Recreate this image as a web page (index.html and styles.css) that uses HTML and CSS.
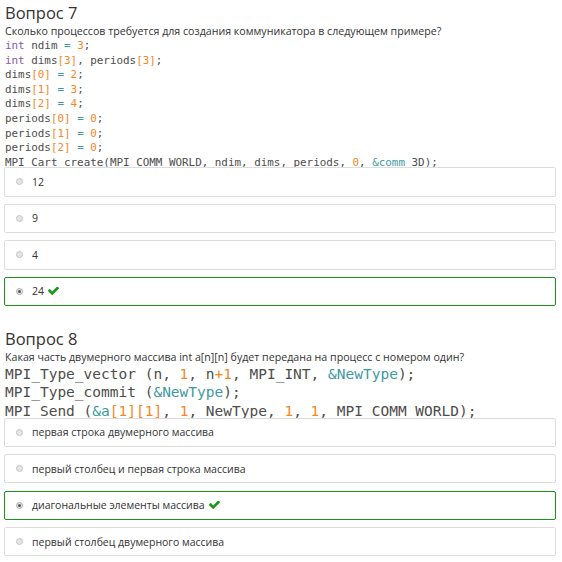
FILE: index.html
```html
<!DOCTYPE html>
<html lang="ru">
<head>
<meta charset="utf-8">
<title>Вопросы</title>
<link rel="stylesheet" href="styles.css">
</head>
<body>
<div class="page">
  <section class="question q7">
    <h2 class="q-title">Вопрос 7</h2>
    <p class="q-text">Сколько процессов требуется для создания коммуникатора в следующем примере?</p>
    <div class="code code-small">
      <div class="line"><span class="kw">int</span> ndim <span class="op">=</span> <span class="num">3</span>;</div>
      <div class="line"><span class="kw">int</span> dims<span class="num">[3]</span>, periods<span class="num">[3]</span>;</div>
      <div class="line">dims<span class="num">[0]</span> <span class="op">=</span> <span class="num">2</span>;</div>
      <div class="line">dims<span class="num">[1]</span> <span class="op">=</span> <span class="num">3</span>;</div>
      <div class="line">dims<span class="num">[2]</span> <span class="op">=</span> <span class="num">4</span>;</div>
      <div class="line">periods<span class="num">[0]</span> <span class="op">=</span> <span class="num">0</span>;</div>
      <div class="line">periods<span class="num">[1]</span> <span class="op">=</span> <span class="num">0</span>;</div>
      <div class="line">periods<span class="num">[2]</span> <span class="op">=</span> <span class="num">0</span>;</div>
      <div class="line">MPI_Cart_create(MPI_COMM_WORLD, ndim, dims, periods, <span class="num">0</span>, <span class="op">&amp;comm</span>_3D);</div>
    </div>
    <div class="answers answers-7">
      <div class="answer"><span class="radio"></span><span class="label">12</span></div>
      <div class="answer"><span class="radio"></span><span class="label">9</span></div>
      <div class="answer"><span class="radio"></span><span class="label">4</span></div>
      <div class="answer correct"><span class="radio checked"></span><span class="label">24</span><svg class="check" viewBox="121 400 1550 1124" width="11" height="8"><path d="M1671 566q0 40-28 68l-724 724-136 136q-28 28-68 28t-68-28l-136-136-362-362q-28-28-28-68t28-68l136-136q28-28 68-28t68 28l294 295 656-657q28-28 68-28t68 28l136 136q28 28 28 68z"/></svg></div>
    </div>
  </section>
  <section class="question q8">
    <h2 class="q-title">Вопрос 8</h2>
    <p class="q-text">Какая часть двумерного массива int a[n][n] будет передана на процесс с номером один?</p>
    <div class="code code-large">
      <div class="line">MPI_Type_vector (n, <span class="num">1</span>, n<span class="num">+1</span>, MPI_INT, <span class="op">&amp;NewType</span>);</div>
      <div class="line">MPI_Type_commit (<span class="op">&amp;NewType</span>);</div>
      <div class="line">MPI_Send (<span class="op">&amp;a</span><span class="num">[1][1]</span>, <span class="num">1</span>, NewType, <span class="num">1</span>, <span class="num">1</span>, MPI_COMM_WORLD);</div>
    </div>
    <div class="answers answers-8">
      <div class="answer"><span class="radio"></span><span class="label">первая строка двумерного массива</span></div>
      <div class="answer"><span class="radio"></span><span class="label">первый столбец и первая строка массива</span></div>
      <div class="answer correct"><span class="radio checked"></span><span class="label">диагональные элементы массива</span><svg class="check" viewBox="121 400 1550 1124" width="11" height="8"><path d="M1671 566q0 40-28 68l-724 724-136 136q-28 28-68 28t-68-28l-136-136-362-362q-28-28-28-68t28-68l136-136q28-28 68-28t68 28l294 295 656-657q28-28 68-28t68 28l136 136q28 28 28 68z"/></svg></div>
      <div class="answer"><span class="radio"></span><span class="label">первый столбец двумерного массива</span></div>
    </div>
  </section>
</div>
</body>
</html>
```
FILE: styles.css
```css
html, body {
  margin: 0;
  padding: 0;
  background: #fff;
}

body {
  font-family: "Open Sans", "Liberation Sans", sans-serif;
  color: #333;
}

.page {
  padding: 1.5px 6px 0 4px;
}

.question {
  display: flex;
  flex-direction: column;
}

.q8 {
  margin-top: 21.5px;
}

.q-title {
  margin: 0 0 0 1px;
  font-size: 16.5px;
  line-height: 22px;
  font-weight: 400;
  color: #333;
}

.q-text {
  margin: 0 0 0 1px;
  font-size: 10.65px;
  line-height: 14px;
  color: #333;
}

.code {
  margin: 0 0 0 1px;
  font-family: "DejaVu Sans Mono", "Liberation Mono", monospace;
  color: #4d4d4c;
}

.line {
  white-space: pre;
}

.code-small {
  font-size: 10.9px;
  line-height: 14.6px;
  padding-top: 1.5px;
}

.code-large {
  font-size: 14.5px;
  line-height: 18.7px;
  padding-top: 1px;
}

.kw { color: #8959a8; }
.num { color: #f5871f; }
.op { color: #3e999f; }

.answers {
  position: relative;
  display: flex;
  flex-direction: column;
  gap: 7.2px;
}

.answers-7 {
  margin-top: -3px;
}

.answers-8 {
  margin-top: -3px;
}

.answer {
  display: flex;
  align-items: center;
  height: 29.3px;
  box-sizing: border-box;
  border: 1px solid #ddd;
  border-radius: 2px;
  background: #fff;
  padding-left: 11px;
  font-size: 10.5px;
  color: #333;
}

.answer.correct {
  border-color: #1a961a;
}

.radio {
  width: 7px;
  height: 7px;
  box-sizing: border-box;
  border-radius: 50%;
  border: 1px solid #c4c4c4;
  background: #e6e6e6;
  margin-right: 9px;
  flex: none;
  position: relative;
}

.radio.checked {
  background: #e6e6e6;
  border-color: #aaa;
}

.radio.checked::after {
  content: "";
  position: absolute;
  left: 1px;
  top: 1px;
  width: 3px;
  height: 3px;
  border-radius: 50%;
  background: #555;
}

.check {
  margin-left: 4px;
  fill: #1a961a;
  flex: none;
}
```
